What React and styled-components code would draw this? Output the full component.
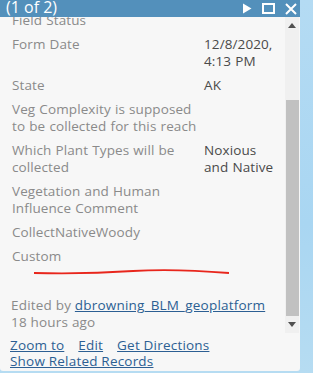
import React from 'react'
import styled, { createGlobalStyle } from 'styled-components'

const Global = createGlobalStyle`
    html, body {
        margin: 0;
        padding: 0;
    }
    body {
        width: 313px;
        height: 373px;
        overflow: hidden;
        background: linear-gradient(180deg, #b4dbf3 0%, #a9d6f2 60%, #b6dcf2 100%);
    }
`

const Page = styled.div`
    width: 313px;
    height: 373px;
    display: flex;
    font-family: "Open Sans", "Noto Sans", sans-serif;
`

const Popup = styled.div`
    width: 300px;
    height: 371px;
    background: #f7f7f7;
    display: flex;
    flex-direction: column;
    border-bottom-right-radius: 3px;
    border-bottom-left-radius: 3px;
    position: relative;
`

const Header = styled.div`
    height: 17px;
    background: #5390bb;
    color: #fff;
    display: flex;
    align-items: center;
    padding: 0 0 0 6px;
    font-size: 16px;
    line-height: 17px;
    overflow: hidden;
`

const Title = styled.div`
    flex: 1;
    margin-top: -3px;
`

const Tools = styled.div`
    display: flex;
    align-items: center;
    gap: 10px;
    padding-right: 3px;
`

const Body = styled.div`
    display: flex;
    height: 316px;
`

const Scroll = styled.div`
    flex: 1;
    overflow: hidden;
    padding-left: 12px;
`

const Inner = styled.div`
    margin-top: -5px;
    position: relative;
`

const Row = styled.div`
    display: grid;
    grid-template-columns: 192px 1fr;
    font-size: 13.5px;
    letter-spacing: 0.1px;
    word-spacing: 0.5px;
    line-height: 17px;
    margin-bottom: 7px;
`

const Label = styled.div`
    color: #8a8a8a;
`

const Value = styled.div`
    color: #4a4a4a;
    padding-right: 4px;
`

const Edited = styled.div`
    color: #8a8a8a;
    font-size: 13.5px;
    letter-spacing: 0.2px;
    line-height: 17px;
    margin-top: 32px;
    margin-left: -1px;

    a {
        color: #2c5f93;
        text-decoration: underline;
    }
`

const Scrollbar = styled.div`
    width: 14px;
    background: #f0f0f0;
    display: flex;
    flex-direction: column;
    align-items: center;
    margin-right: 1px;
`

const Arrow = styled.div`
    height: 17px;
    display: flex;
    align-items: center;
    justify-content: center;
`

const Thumb = styled.div`
    width: 13px;
    background: #c1c1c1;
    margin-top: ${p => p.top}px;
    height: ${p => p.size}px;
`

const Actions = styled.div`
    padding: 4px 0 0 10px;
    font-size: 13.5px;
    letter-spacing: 0.2px;
    line-height: 16px;
    display: flex;
    flex-wrap: wrap;
    column-gap: 14px;
    width: 240px;

    a {
        color: #2c5f93;
        text-decoration: underline;
    }
`

const Scribble = styled.svg`
    position: absolute;
    left: 21px;
    top: 256px;
`

const rows = [
    ['Field Status', ''],
    ['Form Date', '12/8/2020, 4:13 PM'],
    ['State', 'AK'],
    ['Veg Complexity is supposed to be collected for this reach', ''],
    ['Which Plant Types will be collected', 'Noxious and Native'],
    ['Vegetation and Human Influence Comment', ''],
    ['CollectNativeWoody', ''],
    ['Custom', ''],
]

const App = () => (
    <Page>
        <Global />
        <Popup>
            <Header>
                <Title>(1 of 2)</Title>
                <Tools>
                    <svg width="10" height="11" viewBox="0 0 10 11"><path d="M1 0.5 L9.5 5.5 L1 10.5 Z" fill="#fff" /></svg>
                    <svg width="13" height="11" viewBox="0 0 13 11"><rect x="1" y="1" width="11" height="9" fill="none" stroke="#fff" strokeWidth="2" /></svg>
                    <svg width="12" height="12" viewBox="0 0 12 12"><path d="M1 1 L11 11 M11 1 L1 11" stroke="#fff" strokeWidth="2" /></svg>
                </Tools>
            </Header>
            <Body>
                <Scroll>
                    <Inner>
                        {rows.map(([l, v]) => (
                            <Row key={l}>
                                <Label>{l}</Label>
                                <Value>{v}</Value>
                            </Row>
                        ))}
                        <Edited>
                            Edited by <a href="#">dbrowning_BLM_geoplatform</a>
                            <br />18 hours ago
                        </Edited>
                        <Scribble width="200" height="8" viewBox="0 0 200 8">
                            <path d="M1 5 C 40 6, 70 5, 100 3 S 160 2, 196 5" fill="none" stroke="#e8261c" strokeWidth="1.8" />
                        </Scribble>
                    </Inner>
                </Scroll>
                <Scrollbar>
                    <Arrow>
                        <svg width="8" height="5" viewBox="0 0 8 5"><path d="M0 5 L4 0 L8 5 Z" fill="#505050" /></svg>
                    </Arrow>
                    <Thumb top={66} size={216} />
                    <Arrow>
                        <svg width="8" height="5" viewBox="0 0 8 5"><path d="M0 0 L4 5 L8 0 Z" fill="#505050" /></svg>
                    </Arrow>
                </Scrollbar>
            </Body>
            <Actions>
                <a href="#">Zoom to</a>
                <a href="#">Edit</a>
                <a href="#">Get Directions</a>
                <a href="#">Show Related Records</a>
            </Actions>
        </Popup>
    </Page>
)

export default App
